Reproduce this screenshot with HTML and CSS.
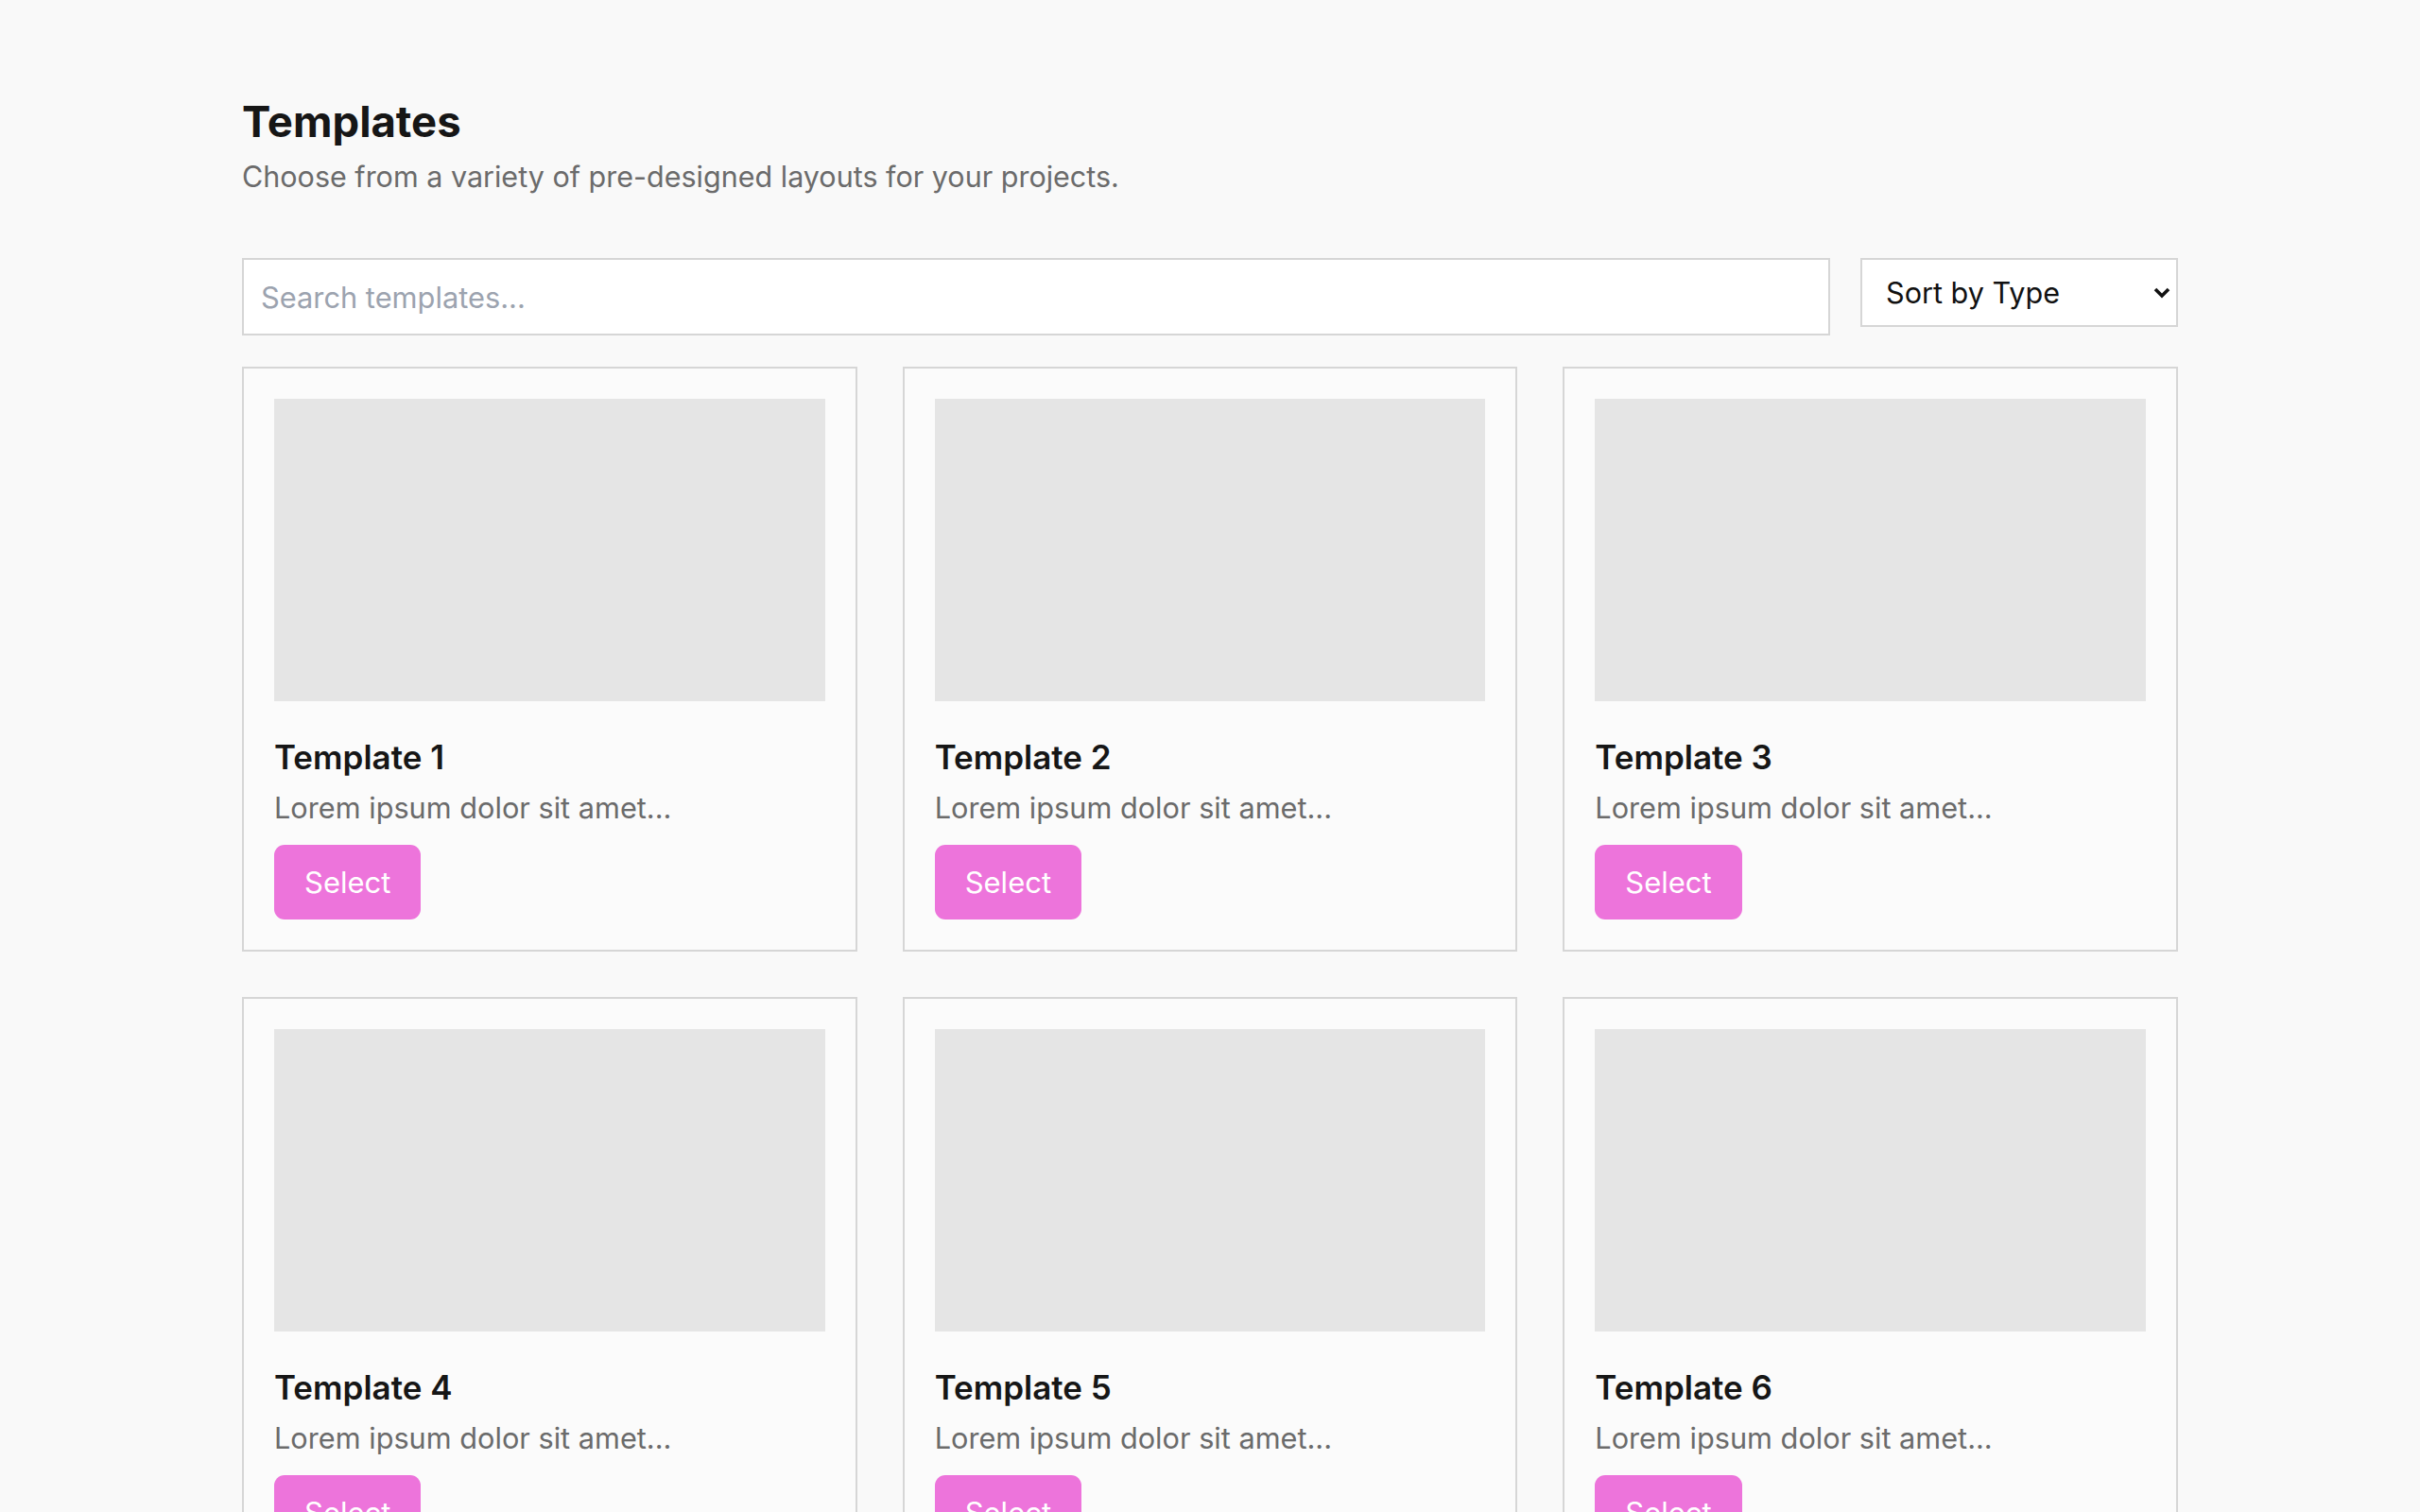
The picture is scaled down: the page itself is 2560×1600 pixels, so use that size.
FILE: index.html
```html
<!DOCTYPE html>
<html lang="en">
<head>
    <meta charset="UTF-8">
    <meta name="viewport" content="width=device-width, initial-scale=1.0">
    <title>Templates</title>
    <link rel="stylesheet" href="styles.css">
</head>
<body>

    <div class="page">
        <header class="page-header">
            <h1>Templates</h1>
            <p class="subtitle">Choose from a variety of pre-designed layouts for your projects.</p>
        </header>

        <div class="toolbar">
            <input type="text" class="search" placeholder="Search templates...">
            <div class="sort">
                <select>
                    <option>Sort by Type</option>
                    <option>Sort by Name</option>
                    <option>Sort by Date</option>
                </select>
                <svg class="chevron" width="18" height="12" viewBox="0 0 18 12">
                    <polyline points="2,2 9,9 16,2" fill="none" stroke="#111" stroke-width="3.6"/>
                </svg>
            </div>
        </div>

        <div class="grid">
            <div class="card">
                <div class="thumb"></div>
                <h2>Template 1</h2>
                <p>Lorem ipsum dolor sit amet...</p>
                <button>Select</button>
            </div>
            <div class="card">
                <div class="thumb"></div>
                <h2>Template 2</h2>
                <p>Lorem ipsum dolor sit amet...</p>
                <button>Select</button>
            </div>
            <div class="card">
                <div class="thumb"></div>
                <h2>Template 3</h2>
                <p>Lorem ipsum dolor sit amet...</p>
                <button>Select</button>
            </div>
            <div class="card">
                <div class="thumb"></div>
                <h2>Template 4</h2>
                <p>Lorem ipsum dolor sit amet...</p>
                <button>Select</button>
            </div>
            <div class="card">
                <div class="thumb"></div>
                <h2>Template 5</h2>
                <p>Lorem ipsum dolor sit amet...</p>
                <button>Select</button>
            </div>
            <div class="card">
                <div class="thumb"></div>
                <h2>Template 6</h2>
                <p>Lorem ipsum dolor sit amet...</p>
                <button>Select</button>
            </div>
        </div>
    </div>

</body>
</html>
```

FILE: styles.css
```css
body {
    font-family: "Inter", "Helvetica Neue", sans-serif;
    background: #f9f9f9;
    color: #171717;
    margin: 0;
    padding: 0;
}

.page {
    max-width: 2048px;
    margin: 0 auto;
    padding-top: 100px;
}

h1 {
    font-size: 45.5px;
    line-height: 58px;
    font-weight: 700;
    margin: 0;
    color: #161616;
}

.subtitle {
    font-size: 30.5px;
    line-height: 45px;
    margin: 6px 0 0;
    color: #6b6b6b;
}

.toolbar {
    display: flex;
    align-items: flex-start;
    gap: 32px;
    margin-top: 64px;
}

.search {
    flex: 1;
    height: 82px;
    box-sizing: border-box;
    border: 2px solid #d6d6d6;
    background: #fff;
    padding: 0 18px;
    font-family: inherit;
    font-size: 30.8px;
    color: #171717;
    outline: none;
}

.search::placeholder {
    color: #9ca3af;
}

.sort {
    position: relative;
    width: 336px;
}

.sort select {
    appearance: none;
    -webkit-appearance: none;
    width: 100%;
    height: 73px;
    box-sizing: border-box;
    border: 2px solid #d6d6d6;
    border-radius: 0;
    background: #fff;
    padding: 0 40px 0 25px;
    font-family: inherit;
    font-size: 30.6px;
    color: #111;
    outline: none;
}

.chevron {
    position: absolute;
    right: 8px;
    top: 31px;
    pointer-events: none;
}

.grid {
    display: grid;
    grid-template-columns: repeat(3, 1fr);
    gap: 48px;
    margin-top: 33px;
}

.card {
    border: 2px solid #d6d6d6;
    background: #fbfbfb;
    padding: 32px;
}

.thumb {
    height: 320px;
    background: #e5e5e5;
}

.card h2 {
    font-size: 35px;
    line-height: 44px;
    font-weight: 600;
    margin: 37px 0 0;
    color: #161616;
}

.card p {
    font-size: 30.7px;
    line-height: 44px;
    margin: 10px 0 0;
    color: #6b6b6b;
}

button {
    display: block;
    margin-top: 17px;
    height: 79px;
    line-height: 79px;
    padding: 0 32px;
    border: none;
    border-radius: 11px;
    background: #ed74db;
    color: #fff;
    font-family: inherit;
    font-size: 31px;
    cursor: pointer;
}

button:hover {
    background: #e25fd0;
}
```
